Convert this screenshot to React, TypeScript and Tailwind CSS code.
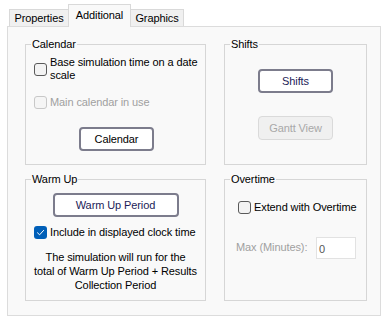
import React from "react";

function Check({ checked = false, disabled = false }: { checked?: boolean; disabled?: boolean }) {
  if (checked) {
    return (
      <span className="w-[13px] h-[13px] shrink-0 rounded-[3px] bg-[#005fb8] flex items-center justify-center">
        <svg width="9" height="9" viewBox="0 0 9 9" fill="none">
          <path d="M1.5 4.8 L3.6 6.8 L7.6 2.4" stroke="#ffffff" strokeWidth="1" strokeLinecap="round" strokeLinejoin="round" />
        </svg>
      </span>
    );
  }
  return (
    <span
      className={
        disabled
          ? "w-[13px] h-[13px] shrink-0 rounded-[3px] border border-[#c8c8c8] bg-[#f5f5f5]"
          : "w-[13px] h-[13px] shrink-0 rounded-[3px] border border-[#5a5a5a] bg-[#f3f3f3]"
      }
    />
  );
}

function Group({ title, children }: { title: string; children: React.ReactNode }) {
  return (
    <fieldset className="m-0 p-0 min-w-0 h-full border border-[#d6d6d6]">
      <legend className="ml-[5px] px-px leading-[14px]">{title}</legend>
      {children}
    </fieldset>
  );
}

export default function App() {
  return (
    <div className="w-[388px] h-[323px] bg-white pt-[4px] pl-[7px] font-['Liberation_Sans',Arial,sans-serif] text-[11px] tracking-[-0.1px] leading-[14px] text-black">
      <div className="flex items-end pl-[2px]">
        <div className="w-[60px] h-[17px] border border-b-0 border-[#d9d9d9] bg-[#f0f0f0] flex items-center justify-center">
          Properties
        </div>
        <div className="relative z-10 -ml-px -mb-px w-[63px] h-[23px] border border-b-0 border-[#d9d9d9] bg-[#f9f9f9] pt-[3px] text-center">
          Additional
        </div>
        <div className="-ml-px w-[54px] h-[17px] border border-b-0 border-[#d9d9d9] bg-[#f0f0f0] flex items-center justify-center">
          Graphics
        </div>
      </div>
      <div className="w-[374px] h-[290px] border border-[#dcdcdc] bg-[#f9f9f9] pt-[10px] pl-[17px] pr-[13px]">
        <div className="grid grid-cols-[181px_143px] grid-rows-[128px_129px] gap-x-[18px] gap-y-[7px]">
          <Group title="Calendar">
            <div className="flex flex-col pl-[8px]">
              <div className="mt-[5px] flex items-center gap-[3px]">
                <Check />
                <span className="leading-[13px] whitespace-nowrap">
                  Base simulation time on a date
                  <br />
                  scale
                </span>
              </div>
              <div className="mt-[14px] flex items-center gap-[3px] text-[#a0a0a0]">
                <Check disabled />
                <span className="leading-[13px]">Main calendar in use</span>
              </div>
              <button className="mt-[18px] ml-[45px] w-[75px] h-[24px] rounded-[4px] border-2 border-[#7c7c8c] bg-white text-black">
                Calendar
              </button>
            </div>
          </Group>
          <Group title="Shifts">
            <div className="flex flex-col items-center">
              <button className="mt-[18px] w-[75px] h-[24px] rounded-[4px] border-2 border-[#7c7c8c] bg-white text-[#1c1c58]">
                Shifts
              </button>
              <button className="mt-[23px] w-[75px] h-[24px] rounded-[4px] border border-[#dadada] bg-[#f0f0f0] text-[#a8a8a8]">
                Gantt View
              </button>
            </div>
          </Group>
          <Group title="Warm Up">
            <div className="flex flex-col">
              <button className="mt-[7px] self-center w-[126px] h-[24px] rounded-[4px] border-2 border-[#7c7c8c] bg-white text-[#1c1c58]">
                Warm Up Period
              </button>
              <div className="mt-[9px] pl-[8px] flex items-center gap-[3px]">
                <Check checked />
                <span className="leading-[13px]">Include in displayed clock time</span>
              </div>
              <p className="mt-[11px] text-center leading-[14px]">
                The simulation will run for the
                <br />
                total of Warm Up Period + Results
                <br />
                Collection Period
              </p>
            </div>
          </Group>
          <Group title="Overtime">
            <div className="flex flex-col pl-[13px]">
              <div className="mt-[15px] flex items-center gap-[3px]">
                <Check />
                <span className="leading-[13px]">Extend with Overtime</span>
              </div>
              <div className="mt-[23px] -ml-[2px] flex items-center">
                <span className="w-[80px] text-[#a0a0a0] -mt-[3px]">Max (Minutes):</span>
                <div className="w-[40px] h-[22px] border border-[#e2e2e2] bg-white pl-[2px] pt-[4px] text-[#555]">
                  0
                </div>
              </div>
            </div>
          </Group>
        </div>
      </div>
    </div>
  );
}
